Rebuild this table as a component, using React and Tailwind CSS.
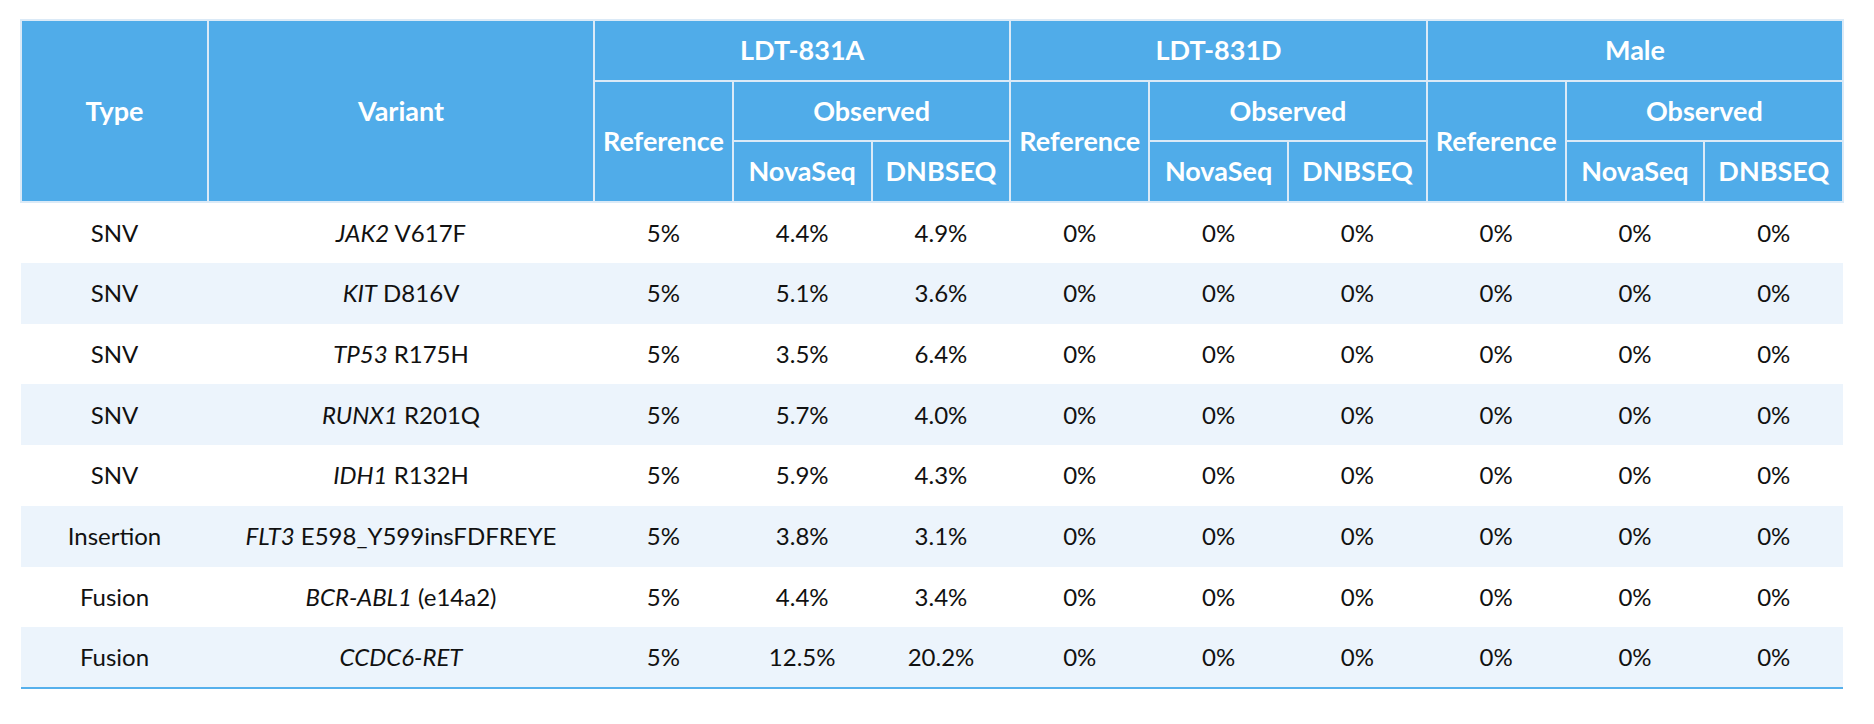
import React from "react";

const rows = [
  { type: "SNV", gene: "JAK2", rest: " V617F", a: ["5%", "4.4%", "4.9%"] },
  { type: "SNV", gene: "KIT", rest: " D816V", a: ["5%", "5.1%", "3.6%"] },
  { type: "SNV", gene: "TP53", rest: " R175H", a: ["5%", "3.5%", "6.4%"] },
  { type: "SNV", gene: "RUNX1", rest: " R201Q", a: ["5%", "5.7%", "4.0%"] },
  { type: "SNV", gene: "IDH1", rest: " R132H", a: ["5%", "5.9%", "4.3%"] },
  { type: "Insertion", gene: "FLT3", rest: " E598_Y599insFDFREYE", a: ["5%", "3.8%", "3.1%"] },
  { type: "Fusion", gene: "BCR-ABL1", rest: " (e14a2)", a: ["5%", "4.4%", "3.4%"] },
  { type: "Fusion", gene: "CCDC6-RET", rest: "", a: ["5%", "12.5%", "20.2%"] },
];

const samples = ["LDT-831A", "LDT-831D", "Male"];

const th = "bg-[#50ace9] text-white text-[27px] font-bold border-2 border-[#dbeaf7] text-center align-middle";

export default function App() {
  return (
    <div className="w-[1874px] h-[724px] bg-white pt-[19px] pl-[20px] font-['Lato',sans-serif] text-[24px] text-[#111]">
      <table className="table-fixed border-collapse w-[1822px]">
        <colgroup>
          <col className="w-[187px]" />
          <col className="w-[386px]" />
          {Array.from({ length: 9 }).map((_, i) => (
            <col key={i} className="w-[138.8px]" />
          ))}
        </colgroup>
        <thead>
          <tr className="h-[61px]">
            <th rowSpan={3} className={th}>Type</th>
            <th rowSpan={3} className={th}>Variant</th>
            {samples.map((s) => (
              <th key={s} colSpan={3} className={th}>{s}</th>
            ))}
          </tr>
          <tr className="h-[60px]">
            {samples.map((s) => (
              <React.Fragment key={s}>
                <th rowSpan={2} className={th}>Reference</th>
                <th colSpan={2} className={th}>Observed</th>
              </React.Fragment>
            ))}
          </tr>
          <tr className="h-[61px]">
            {samples.map((s) => (
              <React.Fragment key={s}>
                <th className={th}>NovaSeq</th>
                <th className={th}>DNBSEQ</th>
              </React.Fragment>
            ))}
          </tr>
        </thead>
        <tbody className="border-b-2 border-[#56b0ec]">
          {rows.map((r, i) => (
            <tr key={i} className={`h-[60.75px] ${i % 2 === 1 ? "bg-[#ecf4fc]" : "bg-white"}`}>
              <td className="text-center">{r.type}</td>
              <td className="text-center">
                <i>{r.gene}</i>
                {r.rest}
              </td>
              {r.a.map((v, j) => (
                <td key={j} className="text-center">{v}</td>
              ))}
              {Array.from({ length: 6 }).map((_, j) => (
                <td key={"z" + j} className="text-center">0%</td>
              ))}
            </tr>
          ))}
        </tbody>
      </table>
    </div>
  );
}
